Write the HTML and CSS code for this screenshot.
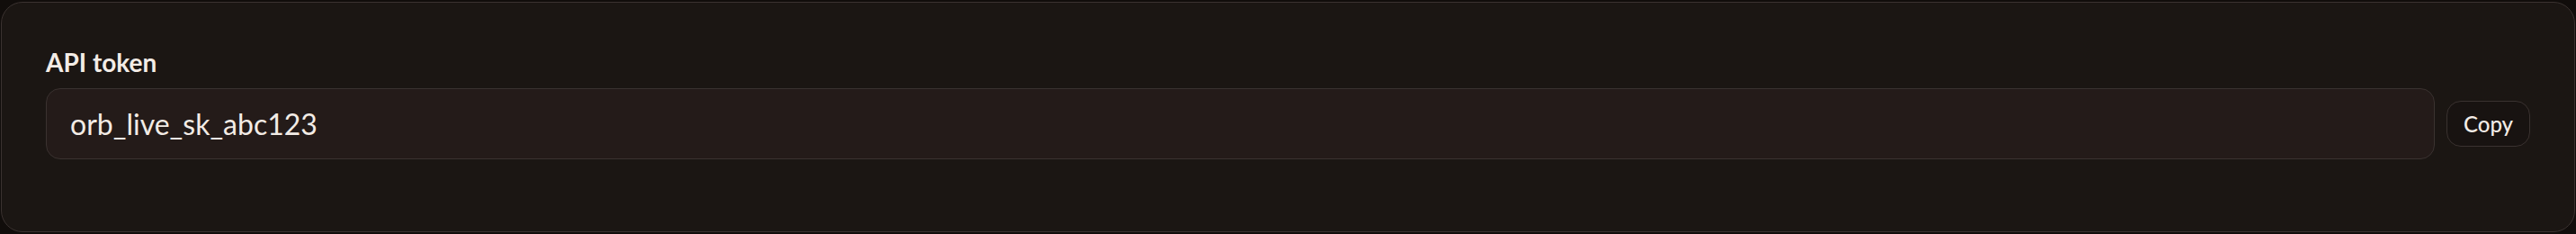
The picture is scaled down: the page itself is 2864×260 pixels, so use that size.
FILE: index.html
```html
<!DOCTYPE html>
<html lang="en">
<head>
	<meta charset="UTF-8">
	<meta name="viewport" content="width=device-width, initial-scale=1.0">
	<title>API token</title>
	<link rel="stylesheet" href="styles.css">
</head>
<body>
<div class="card">
	<label class="field-label" for="token">API token</label>
	<div class="token-row">
		<input class="token-input" id="token" type="text" value="orb_live_sk_abc123" readonly>
		<button class="copy-btn" type="button">Copy</button>
	</div>
</div>
</body>
</html>
```

FILE: styles.css
```css
* {
	box-sizing: border-box;
}

body {
	margin: 0;
	padding: 2px 1px;
	background: #110d0b;
	font-family: Lato, 'Noto Sans', sans-serif;
	color: #f3ece6;
}

.card {
	height: 256px;
	padding: 49px 49px 0;
	background: #1b1613;
	border: 1px solid #3a3230;
	border-radius: 24px;
}

.field-label {
	display: block;
	font-size: 28px;
	line-height: 34px;
	font-weight: 700;
	margin-bottom: 12px;
}

/* input + copy button */
.token-row {
	display: flex;
	align-items: center;
	gap: 13px;
}

.token-input {
	flex: 1;
	height: 79px;
	padding: 0 26px;
	background: #241b19;
	border: 1px solid #3a3230;
	border-radius: 16px;
	color: #f3ece6;
	font-family: inherit;
	font-size: 32px;
	outline: none;
}

.copy-btn {
	width: 93px;
	height: 51px;
	padding: 0;
	background: #181311;
	border: 1.5px solid #3a3230;
	border-radius: 16px;
	color: #f3ece6;
	font-family: inherit;
	font-size: 24px;
	font-weight: 500;
}
```
